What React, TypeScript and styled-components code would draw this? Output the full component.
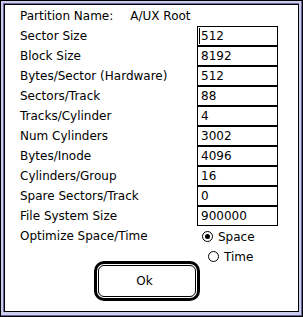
import React from "react";
import styled, { createGlobalStyle } from "styled-components";

const Global = createGlobalStyle`
  html, body { margin: 0; padding: 0; background: #fff; }
  body {
    font-family: "DejaVu Sans", "Liberation Sans", sans-serif;
    font-size: 12px;
    color: #000;
  }
  * { box-sizing: border-box; }
`;

const Window = styled.div`
  width: 303px;
  height: 317px;
  border: 1px solid #000;
  display: flex;
`;

const Bevel = styled.div`
  flex: 1;
  display: flex;
  background: #ccccee;
  padding: 2px 2px 3px 2px;
  border-right: 1px solid #666699;
  border-bottom: 1px solid #666699;
`;

const Inset = styled.div`
  flex: 1;
  display: flex;
  border-top: 1px solid #666699;
  border-left: 1px solid #666699;
`;

const Panel = styled.div`
  flex: 1;
  background: #fff;
  border: 1px solid #000;
  padding: 1px 0 0 0;
  display: flex;
  flex-direction: column;
`;

const Form = styled.div`
  display: grid;
  grid-template-columns: 177px 81px;
  grid-auto-rows: 20px;
  padding-left: 15px;
`;

const Label = styled.div`
  line-height: 20px;
  white-space: nowrap;
`;

const TitleRow = styled.div`
  grid-column: 1 / span 2;
  display: flex;
  line-height: 20px;
  white-space: nowrap;
`;

const TitleValue = styled.span`
  margin-left: 17px;
`;

const Field = styled.div`
  position: relative;
  border: 1px solid #000;
  height: 20px;
  line-height: 18px;
  padding-left: 3px;
  white-space: nowrap;
`;

const Caret = styled.span`
  position: absolute;
  left: 1px;
  top: 1px;
  width: 1px;
  height: 16px;
  background: #000;
`;

const RadioRow = styled.label`
  display: flex;
  align-items: center;
  height: 21px;
  padding-left: 5px;
  gap: 5px;
  line-height: 20px;
`;

const RadioCircle = styled.span<{ $on?: boolean }>`
  position: relative;
  width: 11px;
  height: 11px;
  border: 1px solid #000;
  border-radius: 50%;
  flex: none;
  &::after {
    content: "";
    display: ${(p) => (p.$on ? "block" : "none")};
    position: absolute;
    left: 2px;
    top: 2px;
    width: 5px;
    height: 5px;
    border-radius: 50%;
    background: #000;
  }
`;

const Footer = styled.div`
  display: flex;
  align-items: flex-start;
`;

const ButtonRing = styled.div`
  margin-left: 89px;
  margin-top: 15px;
  width: 106px;
  height: 40px;
  border: 3px solid #000;
  border-radius: 10px;
  padding: 1px;
  display: flex;
`;

const Button = styled.button`
  flex: 1;
  border: 1px solid #000;
  border-radius: 6px;
  background: #fff;
  font: inherit;
  color: #000;
  padding: 0 5px 0 0;
  margin: 0;
`;

const TimeSlot = styled.div`
  margin-left: 3px;
`;

const rows: [string, string][] = [
  ["Sector Size", "512"],
  ["Block Size", "8192"],
  ["Bytes/Sector (Hardware)", "512"],
  ["Sectors/Track", "88"],
  ["Tracks/Cylinder", "4"],
  ["Num Cylinders", "3002"],
  ["Bytes/Inode", "4096"],
  ["Cylinders/Group", "16"],
  ["Spare Sectors/Track", "0"],
  ["File System Size", "900000"],
];

export default function App() {
  return (
    <>
      <Global />
      <Window>
        <Bevel>
          <Inset>
            <Panel>
              <Form>
                <TitleRow>
                  <span>Partition Name:</span>
                  <TitleValue>A/UX Root</TitleValue>
                </TitleRow>
                {rows.map(([label, value], i) => (
                  <React.Fragment key={label}>
                    <Label>{label}</Label>
                    <Field>
                      {i === 0 && <Caret />}
                      {value}
                    </Field>
                  </React.Fragment>
                ))}
                <Label>Optimize Space/Time</Label>
                <RadioRow>
                  <RadioCircle $on />
                  Space
                </RadioRow>
              </Form>
              <Footer>
                <ButtonRing>
                  <Button>Ok</Button>
                </ButtonRing>
                <TimeSlot>
                  <RadioRow>
                    <RadioCircle />
                    Time
                  </RadioRow>
                </TimeSlot>
              </Footer>
            </Panel>
          </Inset>
        </Bevel>
      </Window>
    </>
  );
}
